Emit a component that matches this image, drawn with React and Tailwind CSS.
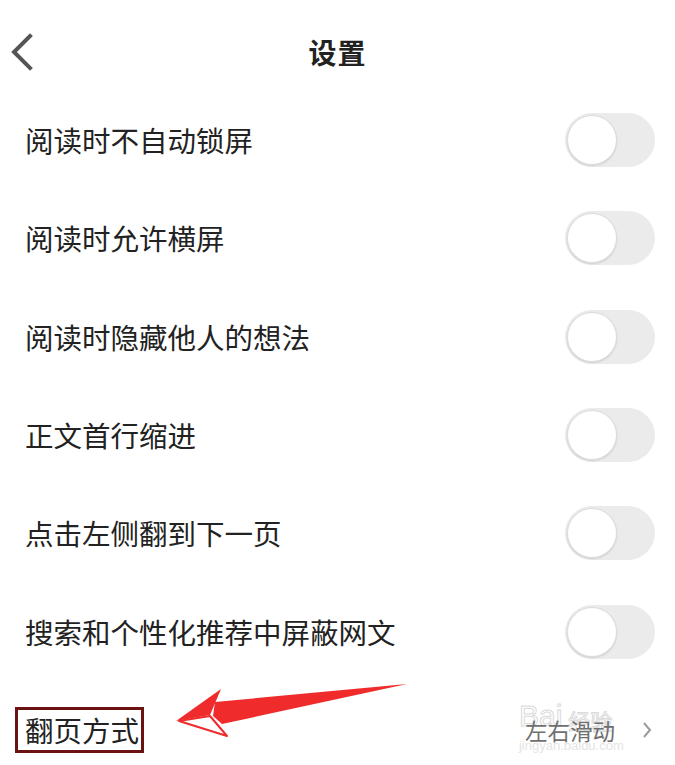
import { useState } from 'react';

const font = { fontFamily: '"Noto Sans CJK SC", "Noto Sans", sans-serif' };

const ROWS = [
    '阅读时不自动锁屏',
    '阅读时允许横屏',
    '阅读时隐藏他人的想法',
    '正文首行缩进',
    '点击左侧翻到下一页',
    '搜索和个性化推荐中屏蔽网文',
];

function Toggle({ on, onChange }) {
    return (
        <button
            onClick={onChange}
            className={`relative w-[90px] h-[54px] rounded-full p-[2px] flex items-center ${on ? 'bg-[#4cd964] justify-end' : 'bg-[#ebebeb] justify-start'}`}
        >
            <span className="w-[50px] h-[50px] rounded-full bg-white border border-[#dcdcdc] shadow-[0_1px_2px_rgba(0,0,0,0.12)]"></span>
        </button>
    );
}

export default function App() {
    const [values, setValues] = useState(ROWS.map(() => false));

    return (
        <div className="relative w-[675px] h-[765px] bg-white overflow-hidden text-[#222]" style={font}>
            {/* header */}
            <div className="relative h-[91px] pt-[13px] flex items-center justify-center">
                <svg className="absolute left-[10px] top-[33px]" width="24" height="38" viewBox="0 0 24 38">
                    <path d="M20 3 L4 19 L20 35" fill="none" stroke="#555" strokeWidth="4" strokeLinecap="square" />
                </svg>
                <h1 className="text-[28px] font-bold leading-none tracking-[1px]">设置</h1>
            </div>

            {ROWS.map((label, i) => (
                <div key={label} className="h-[98.33px] flex items-center justify-between pl-[25px] pr-[20px]">
                    <span className="text-[28.5px] leading-none">{label}</span>
                    <Toggle
                        on={values[i]}
                        onChange={() => setValues(values.map((v, j) => (j === i ? !v : v)))}
                    />
                </div>
            ))}

            {/* page turn mode */}
            <div className="h-[98.33px] flex items-center justify-between pl-[15px] pr-[23px]">
                <div className="h-[46px] border-[3px] border-[#6b1212] pl-[7px] pr-[2px] flex items-center">
                    <span className="text-[28.5px] leading-none">翻页方式</span>
                </div>
                <div className="relative flex items-center gap-[27px]">
                    {/* watermark, sits behind the value text */}
                    <div className="absolute left-[-6px] top-[-18px] flex flex-col items-start pointer-events-none">
                        <div className="flex items-end gap-[6px]">
                            <span className="text-[30px] leading-none text-transparent [-webkit-text-stroke:1px_#dadada]" style={{ fontFamily: '"Liberation Sans", sans-serif' }}>Bai</span>
                            <span className="text-[22px] leading-none text-transparent [-webkit-text-stroke:1px_#dadada]">经验</span>
                        </div>
                        <span className="text-[13px] leading-none mt-[8px] text-[#e4e4e4]" style={{ fontFamily: '"Liberation Sans", sans-serif' }}>jingyan.baidu.com</span>
                    </div>
                    <span className="relative text-[22.5px] leading-none text-[#6f6f6f]">左右滑动</span>
                    <svg width="10" height="18" viewBox="0 0 10 18">
                        <path d="M2 2 L8 9 L2 16" fill="none" stroke="#9a9a9a" strokeWidth="2" />
                    </svg>
                </div>
            </div>

            {/* annotation arrow */}
            <svg className="absolute left-0 top-0 pointer-events-none" width="675" height="765" viewBox="0 0 675 765">
                <polygon points="176,721 221,689 210,715" fill="#ef2b2b" />
                <polygon points="179,721 210,716 227,736" fill="#fff" stroke="#ef2b2b" strokeWidth="2" strokeLinejoin="round" />
                <polygon points="215,702 407,684 222,724 213,716" fill="#ef2b2b" />
            </svg>
        </div>
    );
}
